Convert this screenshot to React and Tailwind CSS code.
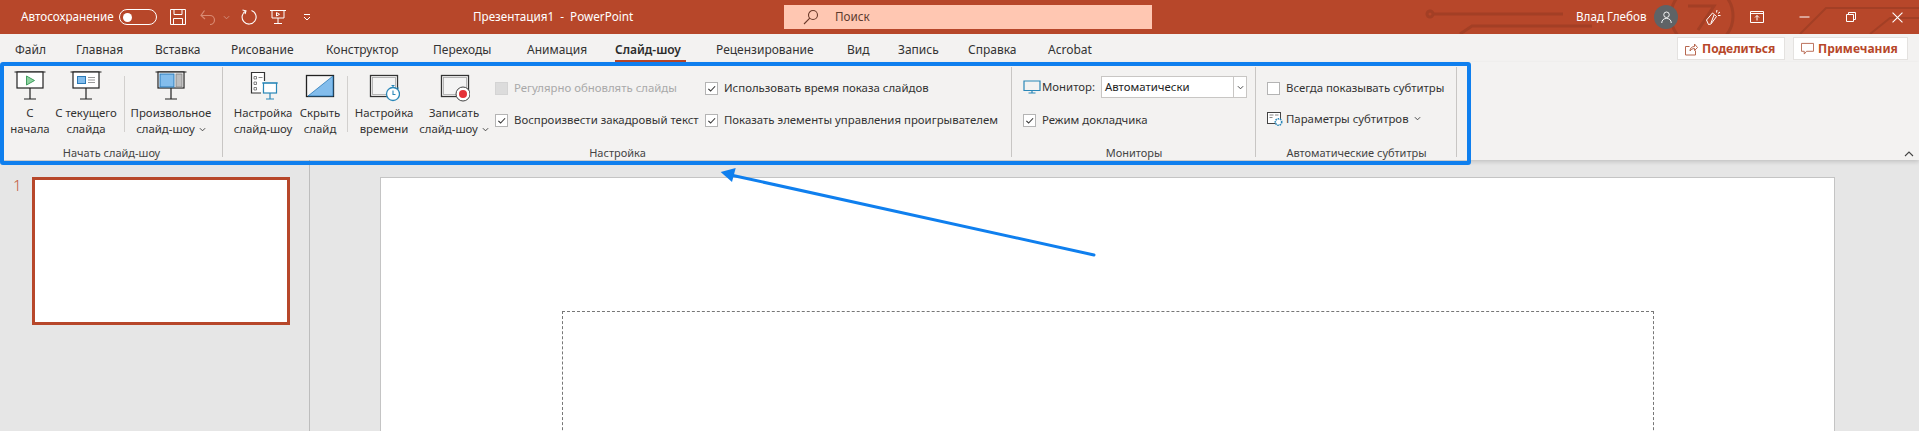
import React from "react";

const Chev = ({ className = "" }) => (
  <svg viewBox="0 0 8 5" className={`inline-block w-[7px] h-[5px] ${className}`} fill="none" stroke="#444" strokeWidth="1.1">
    <path d="M1 1l3 3 3-3" />
  </svg>
);

const Stand = () => (
  <>
    <path d="M.5 1h31M16 17v11M10 28h12" stroke="#222" strokeWidth="1.2" fill="none" />
    <rect x="3" y="1" width="26" height="16" fill="#fff" stroke="#222" strokeWidth="1.2" />
  </>
);

const IconStart = () => (
  <svg viewBox="0 0 32 32" className="w-8 h-8">
    <Stand />
    <path d="M12.5 5v9l8-4.5z" fill="#8fd3a0" stroke="#3f9e5f" strokeWidth="1" />
  </svg>
);
const IconCurrent = () => (
  <svg viewBox="0 0 32 32" className="w-8 h-8">
    <Stand />
    <rect x="7.5" y="5.5" width="8" height="7" fill="#83bdec" stroke="#2a7ab8" />
    <path d="M18 6.5h7M18 9h7M18 11.5h7" stroke="#999" strokeWidth="1" />
  </svg>
);
const IconCustom = () => (
  <svg viewBox="0 0 32 32" className="w-8 h-8">
    <Stand />
    <rect x="5" y="3" width="14" height="13" fill="#83bdec" stroke="#2a7ab8" />
    <rect x="21" y="3" width="6" height="13" fill="#bdbdbd" stroke="#8a8a8a" />
  </svg>
);
const IconSetup = () => (
  <svg viewBox="0 0 32 32" className="w-8 h-8">
    <path d="M14 22H4.5V1.5h13V10" fill="#fff" stroke="#333" strokeWidth="1.2" />
    <path d="M7 5.5h2.5V8H7zM7 11h2.5v2.5H7zM7 16.5h2.500V19H7z" fill="none" stroke="#666" strokeWidth=".8" />
    <path d="M11.5 6.5h4" stroke="#888" />
    <rect x="16.5" y="12" width="13" height="10" fill="#fff" stroke="#2a87b8" strokeWidth="1.2" />
    <path d="M15 12h16M23 22v6M19 28h8" stroke="#2a87b8" strokeWidth="1.2" fill="none" />
  </svg>
);
const IconHide = () => (
  <svg viewBox="0 0 32 32" className="w-8 h-8">
    <rect x="2.5" y="4.5" width="27" height="21" fill="#f7f7f7" stroke="#222" strokeWidth="1.3" />
    <path d="M29 5v20H4z" fill="#83bdec" stroke="#2a7ab8" strokeWidth=".8" />
  </svg>
);
const IconTiming = () => (
  <svg viewBox="0 0 32 32" className="w-8 h-8">
    <rect x="2.5" y="4.5" width="27" height="21" fill="#fff" stroke="#333" strokeWidth="1.3" />
    <rect x="4.5" y="6.5" width="23" height="17" fill="#f4f4f4" stroke="#a6a6a6" strokeWidth=".8" />
    <circle cx="25" cy="23" r="6.5" fill="#fff" stroke="#2a87b8" strokeWidth="1.3" />
    <path d="M25 19.5v4h2.500M23.500 14.500h3M25 14.500v2M29.500 16.500l1 1" stroke="#2a87b8" fill="none" strokeWidth="1.1" />
  </svg>
);
const IconRecord = () => (
  <svg viewBox="0 0 32 32" className="w-8 h-8">
    <rect x="3.5" y="4.5" width="27" height="21" fill="#fff" stroke="#333" strokeWidth="1.3" />
    <rect x="5.5" y="6.5" width="23" height="17" fill="#f4f4f4" stroke="#a6a6a6" strokeWidth=".8" />
    <circle cx="25" cy="23" r="7" fill="#fff" stroke="#444" strokeWidth="1" />
    <circle cx="25" cy="23" r="4" fill="#e53238" />
  </svg>
);

const Big = ({ w, icon, l1, l2, chev }) => (
  <div className={`${w} flex flex-col items-center shrink-0`}>
    <div className="h-[38px] pt-[9px] flex justify-center">{icon}</div>
    <div className="mt-[5px] h-4 leading-4 whitespace-nowrap">{l1}</div>
    <div className="h-4 leading-4 whitespace-nowrap">
      {l2}
      {chev && <Chev className="ml-1 align-middle" />}
    </div>
  </div>
);

const Check = ({ checked, disabled, label }) => (
  <div className={`flex items-center gap-[6px] h-[18px] whitespace-nowrap ${disabled ? "text-[#a9a9a9]" : ""}`}>
    <span className={`w-[13px] h-[13px] border flex items-center justify-center shrink-0 ${disabled ? "bg-[#dcdcdc] border-[#d4d4d4]" : "bg-white border-[#b4b4b4]"}`}>
      {checked && (
        <svg viewBox="0 0 10 10" className="w-[9px] h-[9px]" fill="none" stroke="#333" strokeWidth="1.2">
          <path d="M1.5 5.5L4 7.800l5-5.300" />
        </svg>
      )}
    </span>
    {label}
  </div>
);

const Sep = () => <div className="w-px h-[56px] mt-[14px] bg-[#d2d0ce] shrink-0" />;

const Group = ({ w, label, children }) => (
  <div className={`${w} shrink-0 h-[98px] flex flex-col relative`}>
    <div className="flex-1 flex min-h-0">{children}</div>
    <div className="h-[15px] leading-[15px] text-[11px] text-center whitespace-nowrap text-[#444]">{label}</div>
    <div className="absolute right-0 top-[5px] bottom-[3px] w-px bg-[#c8c6c4]" />
  </div>
);

const tabs = [
  ["Файл", "w-[76px]"],
  ["Главная", "w-[79px]"],
  ["Вставка", "w-[76px]"],
  ["Рисование", "w-[95px]"],
  ["Конструктор", "w-[107px]"],
  ["Переходы", "w-[94px]"],
  ["Анимация", "w-[88px]"],
  ["Слайд-шоу", "w-[101px]"],
  ["Рецензирование", "w-[131px]"],
  ["Вид", "w-[51px]"],
  ["Запись", "w-[70px]"],
  ["Справка", "w-[80px]"],
  ["Acrobat", "w-[60px]"],
];

export default function App() {
  return (
    <div
      className="relative w-[1919px] h-[431px] overflow-hidden bg-[#e6e6e6] text-[#333] text-[11.4px] flex flex-col"
      style={{ fontFamily: '"Noto Sans", "Open Sans", sans-serif' }}
    >
      {/* Title bar */}
      <div className="relative h-[34px] bg-[#b7472a] text-white text-[11.7px] flex items-center shrink-0 overflow-hidden">
        <svg className="absolute left-[1400px] top-0 w-[519px] h-[34px]" viewBox="0 0 519 34" fill="none" stroke="#a33f25" strokeWidth="3">
          <circle cx="30" cy="14" r="3" />
          <path d="M33 14h130M60 34l12-8h120" />
          <circle cx="302" cy="16" r="31" />
          <path d="M288 6h26l-16 24" />
          <path d="M400 34l26-26h93M470 34l20-16h29" strokeWidth="2" />
        </svg>
        <div className="relative flex items-center w-full">
          <span className="ml-[21px] w-[98px] whitespace-nowrap">Автосохранение</span>
          <span className="w-[38px] h-[16px] rounded-full border border-white flex items-center pl-[3px] shrink-0">
            <span className="w-[9px] h-[9px] rounded-full bg-white" />
          </span>
          <svg viewBox="0 0 16 16" className="ml-[13px] w-4 h-4 shrink-0" fill="none" stroke="#fff" strokeWidth="1">
            <path d="M.5.5h15v15H.5zM4 .5v5h8v-5M3.5 15.5v-6h9v6" />
          </svg>
          <svg viewBox="0 0 16 16" className="ml-[14px] w-4 h-4 shrink-0" fill="none" stroke="#d98a72" strokeWidth="1.2">
            <path d="M1 6.500h9a4.500 4.500 0 0 1 0 9M4.500 1.500L1 6.500l4 3.500" />
          </svg>
          <Chev className="ml-[7px] opacity-40 [&>path]:stroke-white" />
          <svg viewBox="0 0 16 16" className="ml-[11px] w-4 h-4 shrink-0" fill="none" stroke="#fff" strokeWidth="1.1">
            <path d="M5 1.800A7 7 0 1 0 10.500 1.500M1.500 1L5 1.800 4 5" />
          </svg>
          <svg viewBox="0 0 16 16" className="ml-[13px] w-4 h-4 shrink-0" fill="none" stroke="#fff" strokeWidth="1">
            <path d="M0 1.500h16M2 1.500V9h12V1.500M8 9v5.500M4 14.500h8" />
            <path d="M6.500 3.500V7l3-1.700z" />
          </svg>
          <svg viewBox="0 0 8 8" className="ml-[17px] w-[8px] h-[8px] shrink-0" fill="none" stroke="#fff" strokeWidth="1">
            <path d="M1 1.500h6M1 4l3 3 3-3" />
          </svg>
          <span className="ml-[162px] w-[154px] whitespace-pre shrink-0">Презентация1  -  PowerPoint</span>
          <div className="ml-[157px] w-[368px] h-[24px] bg-[#ffc7b2] text-[#5c3a2e] flex items-center shrink-0">
            <svg viewBox="0 0 16 16" className="ml-[19px] w-4 h-4" fill="none" stroke="#6b3a2a" strokeWidth="1.1">
              <circle cx="10" cy="6" r="4.5" />
              <path d="M6.800 9.200L1 15" />
            </svg>
            <span className="ml-[16px]">Поиск</span>
          </div>
          <span className="ml-[424px] w-[66px] whitespace-nowrap shrink-0">Влад Глебов</span>
          <span className="ml-[12px] w-6 h-6 rounded-full bg-[#5f6366] flex items-center justify-center shrink-0">
            <svg viewBox="0 0 12 14" className="w-[11px] h-[13px]" fill="none" stroke="#fff" strokeWidth="1">
              <circle cx="6" cy="4" r="3" />
              <path d="M.8 13c0-3 2-5 5.200-5s5.200 2 5.200 5" />
            </svg>
          </span>
          <svg viewBox="0 0 16 16" className="ml-[27px] w-4 h-4 shrink-0" fill="none" stroke="#fff" strokeWidth="1">
            <path d="M1.500 11l6-7 4 3.500L6 15l-2.500.5zM9 6l-3 8M12 1l-.5 2.500M15 3l-2 1.500M15.500 6.500H13" />
          </svg>
          <svg viewBox="0 0 14 12" className="ml-[29px] w-[14px] h-[12px] shrink-0" fill="none" stroke="#fff" strokeWidth="1">
            <path d="M.5.500h13v11H.5zM.5 2.500h13M7 9.500v-5M5 6.500l2-2 2 2" />
          </svg>
          <svg viewBox="0 0 10 2" className="ml-[35px] w-[11px] h-[2px] shrink-0" stroke="#fff" strokeWidth="1">
            <path d="M0 1h10" />
          </svg>
          <svg viewBox="0 0 10 10" className="ml-[36px] w-[10px] h-[10px] shrink-0" fill="none" stroke="#fff" strokeWidth="1">
            <path d="M.5 2.500h7v7h-7zM2.500 2.500v-2h7v7h-2" />
          </svg>
          <svg viewBox="0 0 10 10" className="ml-[36px] w-[11px] h-[11px] shrink-0" fill="none" stroke="#fff" strokeWidth="1">
            <path d="M.5.500l9 9M9.500.500l-9 9" />
          </svg>
        </div>
      </div>

      {/* Tabs row */}
      <div className="h-[28px] bg-[#f3f2f1] flex items-stretch shrink-0 relative text-[12px]">
        {tabs.map(([t, w], i) => (
          <div key={t} className={`${w} relative shrink-0 whitespace-nowrap leading-[32px] ${i === 0 ? "pl-[15px]" : ""} ${i === 7 ? "font-semibold text-[#2b2b2b]" : ""}`}>
            {t}
            {i === 7 && <span className="absolute left-0 w-[71px] bottom-0 h-[2px] bg-[#b7472a]" />}
          </div>
        ))}
        <div className="absolute left-[1677px] top-[3px] flex gap-2 text-[#b7472a] font-bold text-[12px]">
          <div className="w-[108px] h-[23px] bg-white border border-[#e4e2e0] flex items-center pl-[6px] gap-[4px] whitespace-nowrap">
            <svg viewBox="0 0 14 14" className="w-[14px] h-[14px] shrink-0" fill="none" stroke="#b7674f" strokeWidth="1">
              <path d="M11.500 8.500V13h-10V4.500h4M6 9c0-3 2-4.500 4.500-4.500V2l3 3.500-3 3v-2C8.500 6.500 7 7.500 6 9z" />
            </svg>
            Поделиться
          </div>
          <div className="w-[115px] h-[23px] bg-white border border-[#e4e2e0] flex items-center pl-[7px] gap-[4px] whitespace-nowrap">
            <svg viewBox="0 0 14 14" className="w-[13px] h-[13px] shrink-0" fill="none" stroke="#b7674f" strokeWidth="1">
              <path d="M.5 1.500h13V10H6l-2.500 3v-3h-3z" />
            </svg>
            Примечания
          </div>
        </div>
      </div>

      {/* Ribbon */}
      <div className="h-[98px] bg-[#f3f2f1] shrink-0 flex relative z-10 shadow-[0_2px_4px_rgba(0,0,0,0.15)]">
        <Group w="w-[223px]" label="Начать слайд-шоу">
          <div className="w-[8px]" />
          <Big w="w-[44px]" icon={<IconStart />} l1="С" l2="начала" />
          <Big w="w-[68px]" icon={<IconCurrent />} l1="С текущего" l2="слайда" />
          <div className="w-[4px]" />
          <Sep />
          <div className="w-[5px]" />
          <Big w="w-[82px]" icon={<IconCustom />} l1="Произвольное" l2="слайд-шоу" chev />
        </Group>
        <Group w="w-[789px]" label="Настройка">
          <div className="w-[9px]" />
          <Big w="w-[62px]" icon={<IconSetup />} l1="Настройка" l2="слайд-шоу" />
          <Big w="w-[52px]" icon={<IconHide />} l1="Скрыть" l2="слайд" />
          <div className="w-[1px]" />
          <Sep />
          <div className="w-[4px]" />
          <Big w="w-[64px]" icon={<IconTiming />} l1="Настройка" l2="времени" />
          <div className="w-[2px]" />
          <Big w="w-[72px]" icon={<IconRecord />} l1="Записать" l2="слайд-шоу" chev />
          <div className="w-[5px]" />
          <div className="w-[210px] flex flex-col gap-[14px] pt-[17px] shrink-0">
            <Check disabled label="Регулярно обновлять слайды" />
            <Check checked label="Воспроизвести закадровый текст" />
          </div>
          <div className="flex flex-col gap-[14px] pt-[17px] shrink-0">
            <Check checked label="Использовать время показа слайдов" />
            <Check checked label="Показать элементы управления проигрывателем" />
          </div>
        </Group>
        <Group w="w-[244px]" label="Мониторы">
          <div className="pl-[11px] flex flex-col">
            <div className="flex items-center h-[22px] mt-[14px]">
              <svg viewBox="0 0 18 14" className="w-[18px] h-[14px] shrink-0" fill="none" stroke="#2a87b8" strokeWidth="1.2">
                <path d="M1 1h16v9.500H1zM9 10.500V13M5.500 13h7" />
              </svg>
              <span className="ml-[1px] w-[59px] whitespace-nowrap">Монитор:</span>
              <div className="w-[146px] h-[22px] bg-white border border-[#c8c6c4] flex items-center text-[#222]">
                <span className="flex-1 pl-[3px]">Автоматически</span>
                <span className="w-[13px] h-full border-l border-[#c8c6c4] flex items-center justify-center">
                  <Chev />
                </span>
              </div>
            </div>
            <div className="mt-[13px]">
              <Check checked label="Режим докладчика" />
            </div>
          </div>
        </Group>
        <Group w="w-[201px]" label="Автоматические субтитры">
          <div className="pl-[11px] flex flex-col">
            <div className="mt-[17px]">
              <Check label="Всегда показывать субтитры" />
            </div>
            <div className="flex items-center gap-[3px] mt-[13px] whitespace-nowrap">
              <svg viewBox="0 0 16 16" className="w-4 h-4 shrink-0" fill="none">
                <rect x=".5" y="1.5" width="13" height="11" fill="#fff" stroke="#444" />
                <path d="M2.500 4h4M2.500 6.500h3M8 4h3.500" stroke="#888" />
                <circle cx="11.5" cy="11" r="3.2" fill="#fff" stroke="#2a87b8" strokeWidth="1.6" strokeDasharray="1.5 .8" />
              </svg>
              <span>Параметры субтитров</span>
              <Chev className="ml-[2px]" />
            </div>
          </div>
        </Group>
        <svg viewBox="0 0 10 6" className="absolute right-[5px] bottom-[3px] w-[10px] h-[6px]" fill="none" stroke="#444" strokeWidth="1.1">
          <path d="M1 5l4-4 4 4" />
        </svg>
      </div>

      {/* Workspace */}
      <div className="flex-1 flex min-h-0">
        <div className="w-[310px] shrink-0 border-r border-[#bdbdbd] pt-[17px] flex items-start">
          <span className="w-[32px] pl-[13px] text-[#c0563a] text-[15px] leading-[16px] font-light shrink-0">1</span>
          <div className="w-[258px] h-[148px] bg-white border-[3px] border-[#b7472a] shrink-0" />
        </div>
        <div className="flex-1 pt-[17px] pl-[70px]">
          <div className="w-[1455px] h-[300px] bg-white border-l border-r border-t border-[#c4c4c4] pl-[181px] pt-[133px]">
            <div className="w-[1092px] h-[200px] border border-dashed border-[#777]" />
          </div>
        </div>
      </div>

      {/* Annotation overlay */}
      <div className="absolute left-0 top-[62px] w-[1471px] h-[103px] border-4 border-[#0f7fee] rounded-[3px] z-20 pointer-events-none" />
      <svg className="absolute left-0 top-0 w-[1919px] h-[431px] z-20 pointer-events-none" viewBox="0 0 1919 431">
        <path d="M733 175.500L1094 255" stroke="#0f7fee" strokeWidth="3" strokeLinecap="round" fill="none" />
        <path d="M720.700 172L735.700 168L732 182z" fill="#0f7fee" />
      </svg>
    </div>
  );
}
